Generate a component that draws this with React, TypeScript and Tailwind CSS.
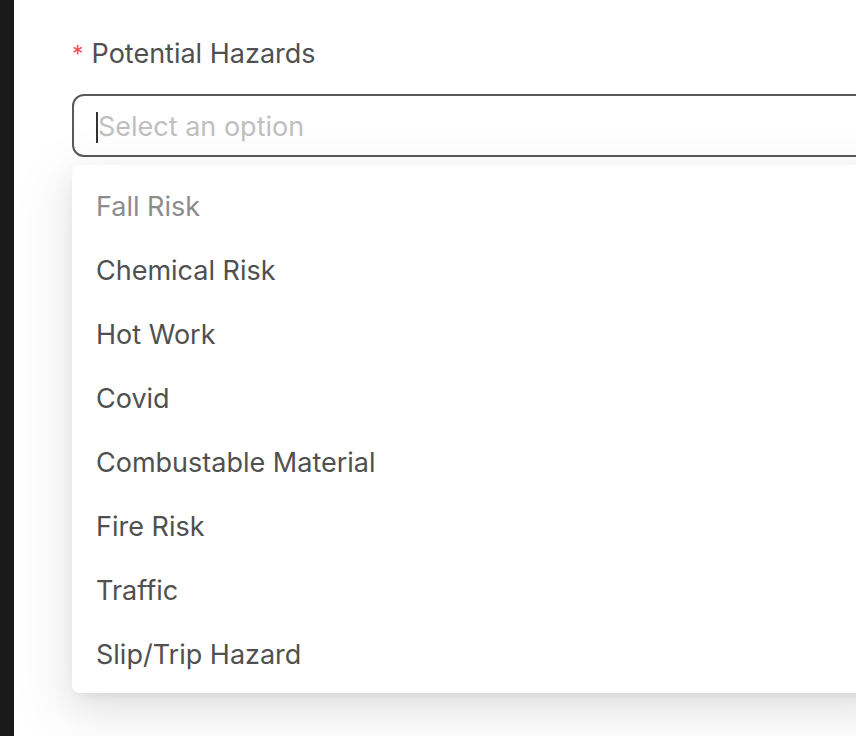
import React from 'react';

const options = [
  'Fall Risk',
  'Chemical Risk',
  'Hot Work',
  'Covid',
  'Combustable Material',
  'Fire Risk',
  'Traffic',
  'Slip/Trip Hazard',
];

const App: React.FC = () => {
  return (
    <div className="flex h-[736px] w-[856px] overflow-hidden bg-white font-['Inter',sans-serif]">
      <div className="w-[14px] shrink-0 bg-[#1a1a1a]" />
      <div className="flex-1 pl-[58px] pt-[36px]">
        <label className="flex h-[36px] items-center text-[27px] text-[#505050]">
          <span className="mr-[8px] text-[23px] text-[#ff4d4f]">*</span>
          Potential Hazards
        </label>
        <div className="relative mt-[22px]">
          <div className="flex h-[63px] w-[820px] items-center rounded-[12px] border-2 border-[#595959] bg-white pl-[22px] pt-[3px]">
            <span className="h-[31px] w-[2px] bg-[#333]" />
            <span className="text-[27px] text-[#bfbfbf]">Select an option</span>
          </div>
          <div className="absolute left-0 top-[71px] w-[820px] rounded-[8px] bg-white py-[8px] shadow-[0_12px_32px_0_rgba(0,0,0,0.08),0_6px_12px_-8px_rgba(0,0,0,0.12),0_18px_56px_16px_rgba(0,0,0,0.05)]">
            {options.map((o, i) => (
              <div
                key={o}
                className={`flex h-[64px] items-center px-[24px] pt-[4px] text-[27px] ${i === 0 ? 'text-[#8c8c8c]' : 'text-[#505050]'}`}
              >
                {o}
              </div>
            ))}
          </div>
        </div>
      </div>
    </div>
  );
};

export default App;
